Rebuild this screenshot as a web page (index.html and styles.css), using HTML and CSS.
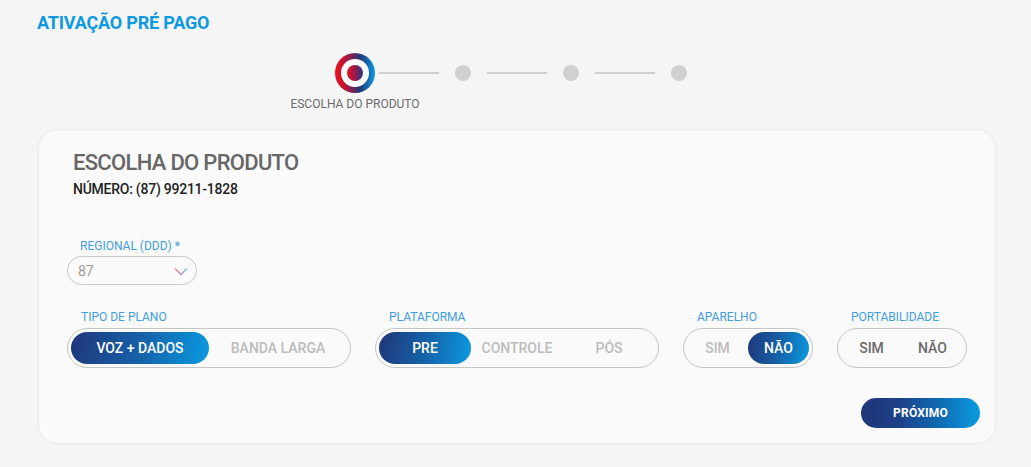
FILE: index.html
```html
<!DOCTYPE html>
<html lang="pt-BR">
<head>
<meta charset="utf-8">
<title>Ativação Pré Pago</title>
<link rel="stylesheet" href="styles.css">
</head>
<body>
<div class="page">
  <h1 class="page-title">ATIVAÇÃO PRÉ PAGO</h1>

  <div class="stepper">
    <div class="step step-active">
      <div class="step-ring"><div class="step-core"></div></div>
      <div class="step-label">ESCOLHA DO PRODUTO</div>
    </div>
    <div class="step-line step-line-first"></div>
    <div class="step"><div class="step-dot"></div></div>
    <div class="step-line"></div>
    <div class="step"><div class="step-dot"></div></div>
    <div class="step-line"></div>
    <div class="step"><div class="step-dot"></div></div>
  </div>

  <section class="card">
    <h2 class="card-title">ESCOLHA DO PRODUTO</h2>
    <div class="card-number">NÚMERO: (87) 99211-1828</div>

    <div class="field">
      <label class="field-label">REGIONAL (DDD) *</label>
      <div class="select">
        <span class="select-value">87</span>
        <svg class="select-chevron" width="14" height="9" viewBox="0 0 14 9">
          <defs>
            <linearGradient id="chev" x1="0" y1="0" x2="1" y2="0">
              <stop offset="0" stop-color="#e8141c"/>
              <stop offset="0.5" stop-color="#5a3a8c"/>
              <stop offset="1" stop-color="#0a9be0"/>
            </linearGradient>
          </defs>
          <polyline points="1,1.5 7,7.5 13,1.5" fill="none" stroke="url(#chev)" stroke-width="1.4" opacity="0.55"/>
        </svg>
      </div>
    </div>

    <div class="groups">
      <div class="group">
        <div class="field-label group-label">TIPO DE PLANO</div>
        <div class="toggle toggle-wide cols-2">
          <span class="opt opt-on">VOZ + DADOS</span>
          <span class="opt">BANDA LARGA</span>
        </div>
      </div>
      <div class="group">
        <div class="field-label group-label">PLATAFORMA</div>
        <div class="toggle toggle-wide cols-3">
          <span class="opt opt-on">PRE</span>
          <span class="opt">CONTROLE</span>
          <span class="opt">PÓS</span>
        </div>
      </div>
      <div class="group">
        <div class="field-label group-label">APARELHO</div>
        <div class="toggle toggle-small cols-2">
          <span class="opt">SIM</span>
          <span class="opt opt-on">NÃO</span>
        </div>
      </div>
      <div class="group">
        <div class="field-label group-label">PORTABILIDADE</div>
        <div class="toggle toggle-small cols-2">
          <span class="opt opt-neutral">SIM</span>
          <span class="opt opt-neutral">NÃO</span>
        </div>
      </div>
    </div>

    <div class="actions">
      <button class="btn-next">PRÓXIMO</button>
    </div>
  </section>
</div>
</body>
</html>
```

FILE: styles.css
```css
* { box-sizing: border-box; }

html, body {
  margin: 0;
  padding: 0;
  background: #f5f5f5;
  font-family: Roboto, "Liberation Sans", Arial, sans-serif;
}

.page {
  padding: 11px 0 0 38px;
  width: 1031px;
  height: 467px;
  overflow: hidden;
}

.page-title {
  margin: 0;
  margin-left: -1px;
  font-size: 18px;
  line-height: 24px;
  font-weight: 700;
  color: #0d9ae0;
  letter-spacing: -0.2px;
}

/* stepper */
.stepper {
  display: flex;
  align-items: flex-start;
  margin-top: 18px;
  padding-left: 297px;
  height: 58px;
}

.step {
  width: 16px;
  height: 40px;
  display: flex;
  flex-direction: column;
  align-items: center;
  justify-content: center;
}

.step-active {
  width: 40px;
  justify-content: flex-start;
}

.step-ring {
  width: 40px;
  height: 40px;
  border-radius: 50%;
  background: linear-gradient(90deg, #ec1219 0%, #b0163f 30%, #23357a 62%, #0b9be0 100%);
  display: flex;
  align-items: center;
  justify-content: center;
  flex: none;
}

.step-core {
  width: 28px;
  height: 28px;
  border-radius: 50%;
  background: #fff;
  display: flex;
  align-items: center;
  justify-content: center;
}

.step-core::after {
  content: "";
  width: 16px;
  height: 16px;
  border-radius: 50%;
  background: linear-gradient(90deg, #ec1219 0%, #a3174a 45%, #1f3a80 100%);
}

.step-label {
  margin: 4px -60px 0;
  white-space: nowrap;
  font-size: 12px;
  line-height: 14px;
  color: #6b6b6b;
  text-align: center;
}

.step-dot {
  width: 16px;
  height: 16px;
  border-radius: 50%;
  background: #d0d0d0;
}

.step-line {
  width: 60px;
  height: 2px;
  background: #cfcfcf;
  margin: 19px 16px 0;
}

.step-line-first {
  margin-left: 4px;
}

/* card */
.card {
  margin-top: 18px;
  width: 958px;
  height: 315px;
  background: #fafafa;
  border: 1px solid #ececec;
  border-radius: 20px;
  box-shadow: 0 0 3px rgba(0, 0, 0, 0.04);
  padding: 19px 15px 14px 28px;
  display: flex;
  flex-direction: column;
}

.card-title {
  margin: 0 0 0 6px;
  font-size: 22px;
  line-height: 28px;
  font-weight: 500;
  color: #666;
  letter-spacing: -0.7px;
}

.card-number {
  margin: 3px 0 0 6px;
  font-size: 14px;
  line-height: 18px;
  font-weight: 500;
  color: #222;
  letter-spacing: -0.25px;
}

.field {
  margin-top: 41px;
  display: flex;
  flex-direction: column;
  align-items: flex-start;
}

.field-label {
  display: block;
  padding-left: 13px;
  font-size: 12px;
  line-height: 14px;
  color: #3f9de0;
}

.select {
  margin-top: 3px;
  width: 130px;
  height: 29px;
  border: 1px solid #c8c8c8;
  border-radius: 15px;
  display: flex;
  align-items: center;
  justify-content: space-between;
  padding: 0 8px 0 10px;
}

.select-value {
  font-size: 14px;
  color: #9a9a9a;
}

.select-chevron {
  display: block;
  margin-top: 1px;
}

/* toggle groups */
.groups {
  margin-top: 25px;
  display: flex;
  gap: 24px;
}

.group {
  display: flex;
  flex-direction: column;
}

.group-label {
  padding-left: 14px;
}

.toggle {
  margin-top: 4px;
  height: 40px;
  border: 1px solid #c6c6c6;
  border-radius: 20px;
  padding: 3px;
  display: grid;
  align-items: stretch;
}

.toggle-wide { width: 284px; }
.toggle-small { width: 130px; }

.cols-2 { grid-template-columns: 1fr 1fr; }
.cols-3 { grid-template-columns: 1fr 1fr 1fr; }

.opt {
  display: flex;
  align-items: center;
  justify-content: center;
  border-radius: 16px;
  font-size: 14px;
  font-weight: 500;
  color: #bcbcbc;
  white-space: nowrap;
}

.opt-on {
  color: #fff;
  background: linear-gradient(100deg, #213679 0%, #1561a8 50%, #0a9ae0 100%);
}

.opt-neutral {
  color: #6a6a6a;
}

.actions {
  margin-top: 30px;
  display: flex;
  justify-content: flex-end;
}

.btn-next {
  width: 119px;
  height: 30px;
  border: none;
  border-radius: 15px;
  background: linear-gradient(90deg, #213679 0%, #1e3f86 30%, #1163ab 60%, #0a9be0 100%);
  color: #fff;
  font-family: inherit;
  font-size: 12px;
  font-weight: 700;
  letter-spacing: 0.2px;
  padding: 0;
  cursor: pointer;
}
```
